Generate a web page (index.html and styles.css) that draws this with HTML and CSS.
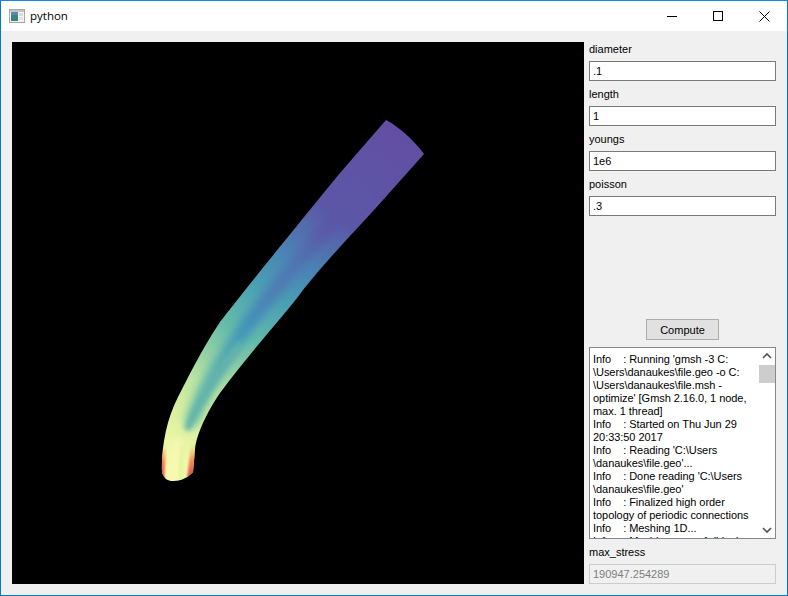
FILE: index.html
```html
<!DOCTYPE html>
<html lang="en">
<head>
<meta charset="utf-8">
<title>python</title>
<link rel="stylesheet" href="styles.css">
</head>
<body>
<div class="window">
  <header class="titlebar">
    <svg class="app-icon" width="16" height="14" viewBox="0 0 16 14">
      <rect x="0.5" y="0.5" width="15" height="13" fill="#f2f2f2" stroke="#a8a8a8"/>
      <rect x="1" y="1" width="14" height="2" fill="#c4c4c4"/>
      <rect x="2" y="3" width="7" height="9" fill="#3f7f86"/>
      <rect x="2" y="3" width="7" height="3" fill="#5b86b0"/>
      <rect x="10" y="4" width="4" height="3" fill="#d5dfd5"/>
      <rect x="10" y="8" width="4" height="3" fill="#dfe6e6"/>
    </svg>
    <span class="title">python</span>
    <div class="controls">
      <div class="ctl"><svg width="10" height="10" viewBox="0 0 10 10"><path d="M0 5.5H10" stroke="#000" fill="none"/></svg></div>
      <div class="ctl"><svg width="10" height="10" viewBox="0 0 10 10"><rect x="0.5" y="0.5" width="9" height="9" stroke="#000" fill="none"/></svg></div>
      <div class="ctl"><svg width="11" height="11" viewBox="0 0 11 11"><path d="M0.5 0.5L10.5 10.5M10.5 0.5L0.5 10.5" stroke="#000" fill="none"/></svg></div>
    </div>
  </header>
  <main class="content">
    <div class="viewport">
      <svg class="plot" width="572" height="542" viewBox="12 42 572 542">
        <defs>
          <clipPath id="beam">
            <path d="M386 120 C398 126 414 140 424 154 L383 200 C360 226 330 256 303 290 C285 315 250 352 220 393 C207 412 196 435 195 450 L193 472 C188 478 180 481 173 481 C168 481 164 479 162 472 C161 450 166 420 178 397 C188 378 200 352 220 322 C240 296 290 234 340 173 Z"/>
          </clipPath>
          <linearGradient id="edge" gradientUnits="userSpaceOnUse" x1="405" y1="137" x2="176" y2="478">
            <stop offset="0" stop-color="#624fa4"/>
            <stop offset="0.25" stop-color="#5b57a6"/>
            <stop offset="0.4" stop-color="#4a85b5"/>
            <stop offset="0.5" stop-color="#4a9fb4"/>
            <stop offset="0.62" stop-color="#65bbaa"/>
            <stop offset="0.7" stop-color="#90cfa5"/>
            <stop offset="0.77" stop-color="#b8e3a2"/>
            <stop offset="0.85" stop-color="#d5eea0"/>
            <stop offset="0.95" stop-color="#f0f8a8"/>
            <stop offset="1" stop-color="#f8f8b0"/>
          </linearGradient>
          <linearGradient id="core" gradientUnits="userSpaceOnUse" x1="405" y1="137" x2="176" y2="478">
            <stop offset="0" stop-color="#624fa4"/>
            <stop offset="0.3" stop-color="#5b58a6"/>
            <stop offset="0.4" stop-color="#4f74b0"/>
            <stop offset="0.5" stop-color="#4d7fb6"/>
            <stop offset="0.6" stop-color="#3f93ba"/>
            <stop offset="0.7" stop-color="#55abb0"/>
            <stop offset="0.8" stop-color="#68b9aa"/>
            <stop offset="0.86" stop-color="#80c6a8"/>
            <stop offset="0.92" stop-color="#c8e8a2"/>
            <stop offset="1" stop-color="#f5f8ae"/>
          </linearGradient>
          <linearGradient id="base" gradientUnits="userSpaceOnUse" x1="178" y1="445" x2="178" y2="480">
            <stop offset="0" stop-color="#f88d52" stop-opacity="0"/>
            <stop offset="0.45" stop-color="#f46d43" stop-opacity="0.8"/>
            <stop offset="1" stop-color="#d53e4f"/>
          </linearGradient>
          <filter id="soft" filterUnits="userSpaceOnUse" x="100" y="80" width="360" height="430"><feGaussianBlur stdDeviation="4"/></filter>
          <filter id="softer" filterUnits="userSpaceOnUse" x="100" y="320" width="180" height="190"><feGaussianBlur stdDeviation="2.5"/></filter>
          <filter id="thin" filterUnits="userSpaceOnUse" x="100" y="380" width="150" height="130"><feGaussianBlur stdDeviation="1.2"/></filter>
        </defs>
        <g clip-path="url(#beam)">
          <rect x="120" y="100" width="320" height="400" fill="url(#edge)"/>
          <path d="M365 185 C330 225 285 275 255 315 C225 355 205 385 190 425" fill="none" stroke="url(#core)" stroke-width="15" filter="url(#soft)"/>
          <path d="M240 345 C220 370 200 398 187 430" fill="none" stroke="#62b4ab" stroke-width="7" filter="url(#softer)"/>
          <path d="M178 440 C175 452 174 466 173 481" fill="none" stroke="#f8f8b4" stroke-width="7" filter="url(#softer)"/>
          <path d="M183 445 C182 456 181 468 181 481" fill="none" stroke="#e6f5a4" stroke-width="5" filter="url(#thin)"/>
          <path d="M161 482 L163 448" fill="none" stroke="url(#base)" stroke-width="6" filter="url(#thin)"/>
          <path d="M192 480 L196 444" fill="none" stroke="url(#base)" stroke-width="10" filter="url(#thin)"/>
        </g>
      </svg>
    </div>
    <aside class="side">
      <div class="field"><label class="label">diameter</label><div class="input">.1</div></div>
      <div class="field"><label class="label">length</label><div class="input">1</div></div>
      <div class="field"><label class="label">youngs</label><div class="input">1e6</div></div>
      <div class="field"><label class="label">poisson</label><div class="input">.3</div></div>
      <div class="action"><button class="button" type="button">Compute</button></div>
      <div class="log">
        <div class="log-text">Info    : Running 'gmsh -3 C:
\Users\danaukes\file.geo -o C:
\Users\danaukes\file.msh -
optimize' [Gmsh 2.16.0, 1 node,
max. 1 thread]
Info    : Started on Thu Jun 29
20:33:50 2017
Info    : Reading 'C:\Users
\danaukes\file.geo'...
Info    : Done reading 'C:\Users
\danaukes\file.geo'
Info    : Finalized high order
topology of periodic connections
Info    : Meshing 1D...
Info    : Meshing curve 1 (Line)</div>
        <div class="scrollbar">
          <svg class="arrow" width="16" height="17" viewBox="0 0 16 17"><path d="M4 10L8 6L12 10" fill="none" stroke="#505050" stroke-width="1.6"/></svg>
          <div class="track"><div class="thumb"></div></div>
          <svg class="arrow" width="16" height="17" viewBox="0 0 16 17"><path d="M4 7L8 11L12 7" fill="none" stroke="#505050" stroke-width="1.6"/></svg>
        </div>
      </div>
      <div class="field result"><label class="label">max_stress</label><div class="input disabled">190947.254289</div></div>
    </aside>
  </main>
</div>
</body>
</html>
```
FILE: styles.css
```css
* { box-sizing: border-box; }
html, body { margin: 0; padding: 0; }
body { width: 788px; height: 596px; overflow: hidden; font-family: "Liberation Sans", Arial, sans-serif; font-size: 11px; color: #000; }
.window { width: 788px; height: 596px; border: 1px solid #0078d7; border-top-color: #1a86db; background: #f0f0f0; display: flex; flex-direction: column; }
.titlebar { height: 30px; flex: none; background: #fff; display: flex; align-items: center; padding-left: 8px; }
.app-icon { flex: none; margin-top: -1px; }
.title { margin-left: 5px; font-family: "Open Sans", sans-serif; font-size: 11.5px; line-height: 16px; }
.controls { margin-left: auto; display: flex; height: 30px; }
.ctl { width: 46px; height: 30px; display: flex; align-items: center; justify-content: center; }
.content { flex: 1; display: flex; padding: 11px; gap: 5px; min-height: 0; }
.viewport { width: 572px; height: 542px; flex: none; background: #000; overflow: hidden; }
.plot { display: block; }
.side { width: 187px; flex: none; display: flex; flex-direction: column; }
.field { display: flex; flex-direction: column; height: 45px; }
.label { height: 19px; line-height: 14px; }
.input { height: 20px; border: 1px solid #7a7a7a; background: #fff; line-height: 19px; padding-left: 3px; }
.disabled { background: #f0f0f0; border-color: #cccccc; color: #7d7d7d; }
.action { margin-top: 97px; height: 28px; display: flex; justify-content: center; align-items: flex-start; }
.button { width: 73px; height: 21px; border: 1px solid #adadad; background: #e1e1e1; font: inherit; color: #000; padding: 0; }
.log { height: 192px; flex: none; border: 1px solid #828790; background: #fff; display: flex; overflow: hidden; }
.log-text { width: 169px; flex: none; white-space: pre; line-height: 13px; padding: 5px 0 0 3px; overflow: hidden; letter-spacing: -0.05px; }
.scrollbar { width: 16px; flex: none; display: flex; flex-direction: column; background: #fff; }
.arrow { flex: none; display: block; }
.track { flex: 1; }
.thumb { height: 18px; background: #cdcdcd; }
.result { margin-top: 6px; height: auto; }
```
